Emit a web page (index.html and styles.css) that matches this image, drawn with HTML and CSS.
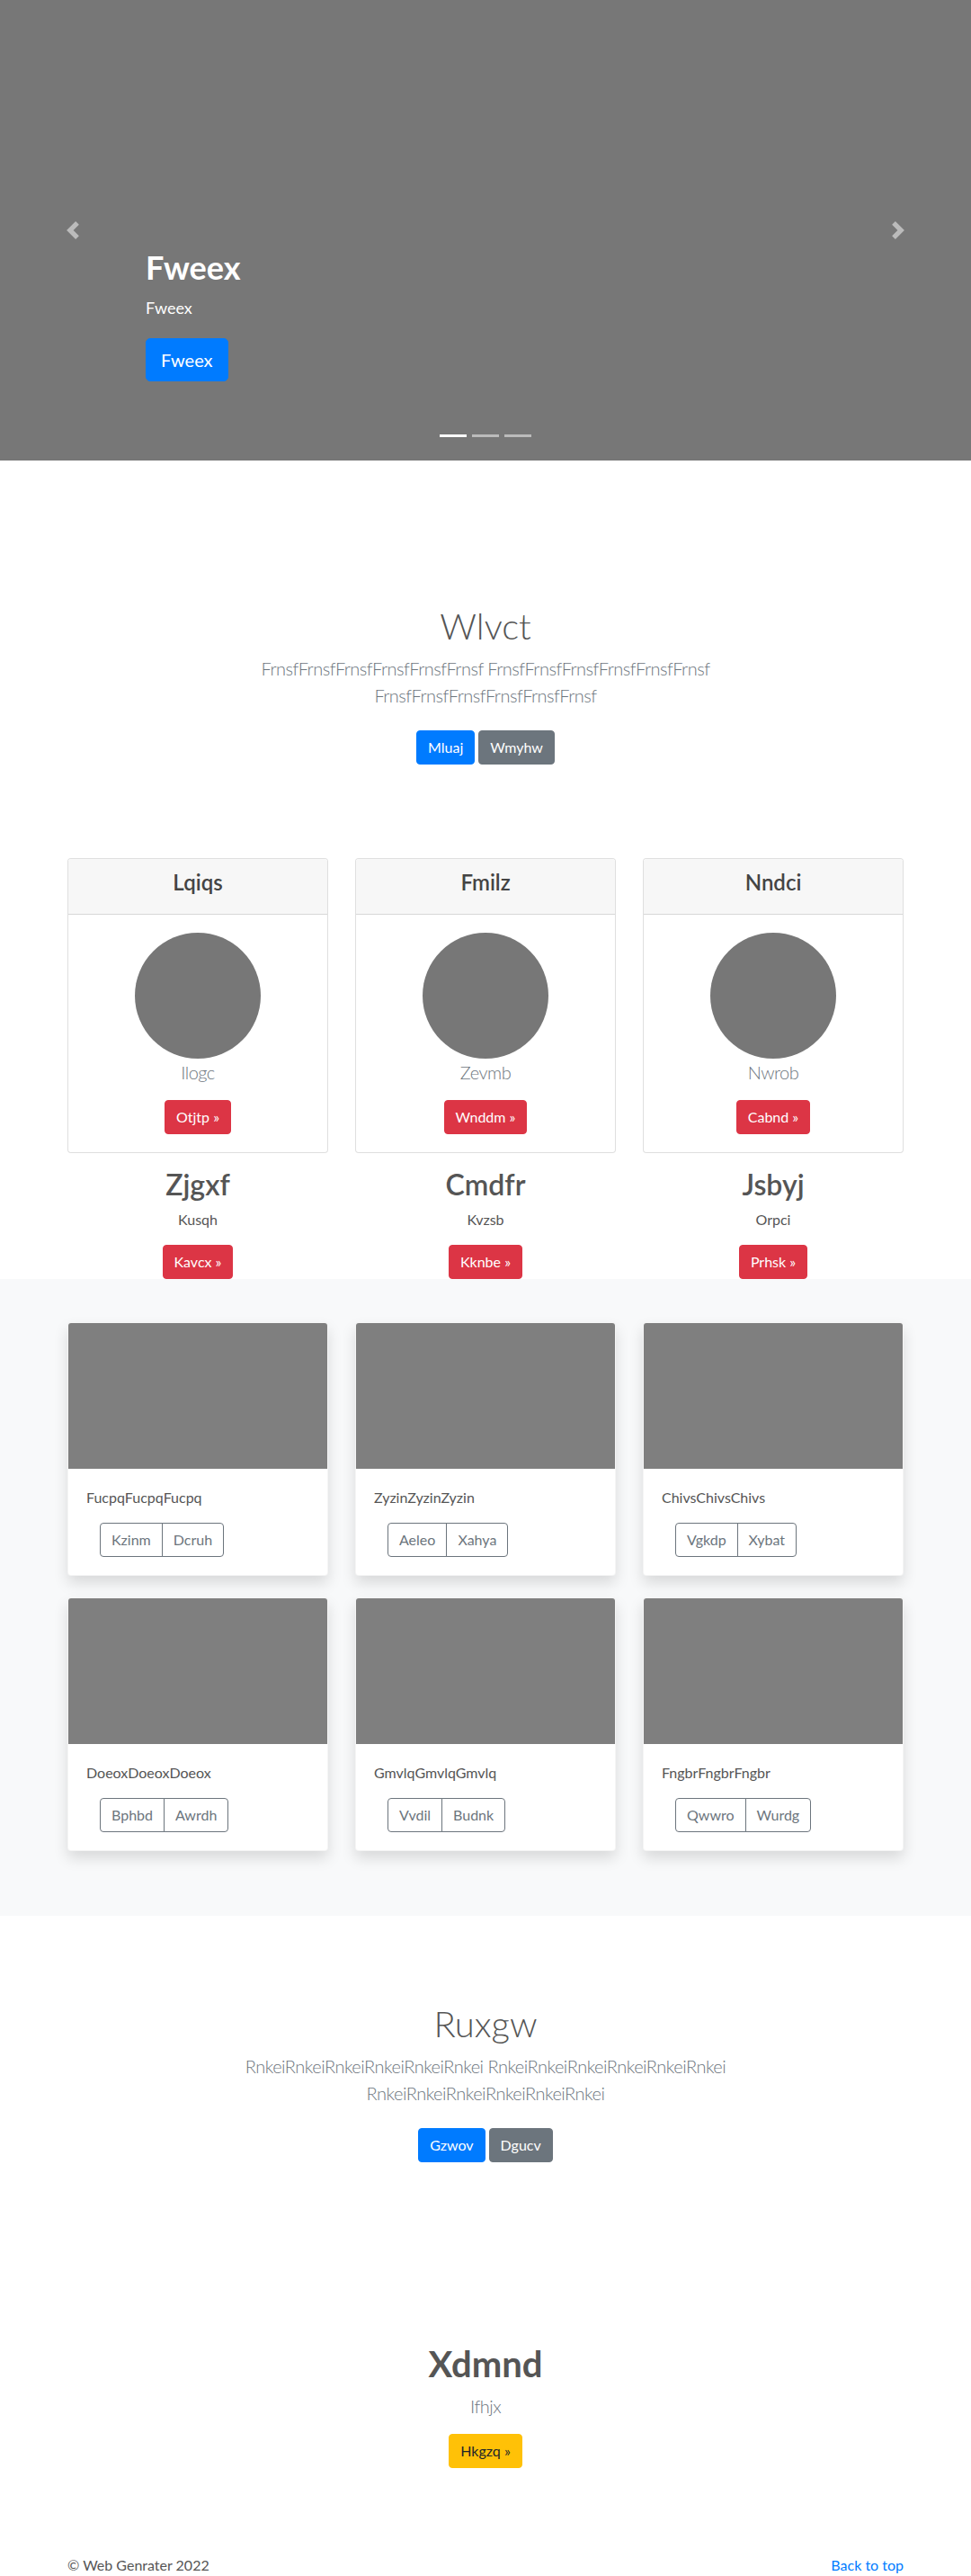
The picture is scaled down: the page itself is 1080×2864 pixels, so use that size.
FILE: index.html
```html
<!DOCTYPE html>
<html lang="en">
<head>
    <meta charset="UTF-8">
    <meta name="viewport" content="width=device-width, initial-scale=1.0">
    <title>Web Genrater</title>
    <link rel="stylesheet" href="styles.css">
</head>
<body>
    <!-- 轮播 -->
    <div class="hero">
        <a class="hero-control hero-prev" href="#">
            <svg width="20" height="20" viewBox="0 0 8 8"><path d="M5.25 0l-4 4 4 4 1.5-1.5L4.25 4l2.5-2.5L5.25 0z"/></svg>
        </a>
        <div class="hero-caption">
            <h1>Fweex</h1>
            <p>Fweex</p>
            <a class="btn btn-lg btn-primary" href="#">Fweex</a>
        </div>
        <a class="hero-control hero-next" href="#">
            <svg width="20" height="20" viewBox="0 0 8 8"><path d="M2.75 0l-1.5 1.5L3.75 4l-2.5 2.5L2.75 8l4-4-4-4z"/></svg>
        </a>
        <ol class="hero-indicators">
            <li class="active"></li>
            <li></li>
            <li></li>
        </ol>
    </div>

    <!-- 介绍 -->
    <section class="intro">
        <h1 class="intro-title">Wlvct</h1>
        <p class="lead text-muted">FrnsfFrnsfFrnsfFrnsfFrnsfFrnsf FrnsfFrnsfFrnsfFrnsfFrnsfFrnsf FrnsfFrnsfFrnsfFrnsfFrnsfFrnsf</p>
        <div class="btn-row">
            <a class="btn btn-primary" href="#">Mluaj</a>
            <a class="btn btn-secondary" href="#">Wmyhw</a>
        </div>
    </section>

    <!-- 三栏卡片 -->
    <div class="container">
        <div class="grid-3">
            <div class="col">
                <div class="card price-card">
                    <div class="card-header"><h4>Lqiqs</h4></div>
                    <div class="card-body">
                        <div class="avatar"></div>
                        <p class="lead text-muted">Ilogc</p>
                        <a class="btn btn-danger" href="#">Otjtp &raquo;</a>
                    </div>
                </div>
                <h2>Zjgxf</h2>
                <p>Kusqh</p>
                <a class="btn btn-danger" href="#">Kavcx &raquo;</a>
            </div>
            <div class="col">
                <div class="card price-card">
                    <div class="card-header"><h4>Fmilz</h4></div>
                    <div class="card-body">
                        <div class="avatar"></div>
                        <p class="lead text-muted">Zevmb</p>
                        <a class="btn btn-danger" href="#">Wnddm &raquo;</a>
                    </div>
                </div>
                <h2>Cmdfr</h2>
                <p>Kvzsb</p>
                <a class="btn btn-danger" href="#">Kknbe &raquo;</a>
            </div>
            <div class="col">
                <div class="card price-card">
                    <div class="card-header"><h4>Nndci</h4></div>
                    <div class="card-body">
                        <div class="avatar"></div>
                        <p class="lead text-muted">Nwrob</p>
                        <a class="btn btn-danger" href="#">Cabnd &raquo;</a>
                    </div>
                </div>
                <h2>Jsbyj</h2>
                <p>Orpci</p>
                <a class="btn btn-danger" href="#">Prhsk &raquo;</a>
            </div>
        </div>
    </div>

    <!-- 相册 -->
    <div class="album">
        <div class="container">
            <div class="grid-3 album-grid">
                <div class="card album-card">
                    <div class="thumb"></div>
                    <div class="card-body">
                        <p>FucpqFucpqFucpq</p>
                        <div class="btn-group">
                            <a class="btn btn-outline" href="#">Kzinm</a>
                            <a class="btn btn-outline" href="#">Dcruh</a>
                        </div>
                    </div>
                </div>
                <div class="card album-card">
                    <div class="thumb"></div>
                    <div class="card-body">
                        <p>ZyzinZyzinZyzin</p>
                        <div class="btn-group">
                            <a class="btn btn-outline" href="#">Aeleo</a>
                            <a class="btn btn-outline" href="#">Xahya</a>
                        </div>
                    </div>
                </div>
                <div class="card album-card">
                    <div class="thumb"></div>
                    <div class="card-body">
                        <p>ChivsChivsChivs</p>
                        <div class="btn-group">
                            <a class="btn btn-outline" href="#">Vgkdp</a>
                            <a class="btn btn-outline" href="#">Xybat</a>
                        </div>
                    </div>
                </div>
                <div class="card album-card">
                    <div class="thumb"></div>
                    <div class="card-body">
                        <p>DoeoxDoeoxDoeox</p>
                        <div class="btn-group">
                            <a class="btn btn-outline" href="#">Bphbd</a>
                            <a class="btn btn-outline" href="#">Awrdh</a>
                        </div>
                    </div>
                </div>
                <div class="card album-card">
                    <div class="thumb"></div>
                    <div class="card-body">
                        <p>GmvlqGmvlqGmvlq</p>
                        <div class="btn-group">
                            <a class="btn btn-outline" href="#">Vvdil</a>
                            <a class="btn btn-outline" href="#">Budnk</a>
                        </div>
                    </div>
                </div>
                <div class="card album-card">
                    <div class="thumb"></div>
                    <div class="card-body">
                        <p>FngbrFngbrFngbr</p>
                        <div class="btn-group">
                            <a class="btn btn-outline" href="#">Qwwro</a>
                            <a class="btn btn-outline" href="#">Wurdg</a>
                        </div>
                    </div>
                </div>
            </div>
        </div>
    </div>

    <!-- 第二个介绍 -->
    <section class="intro">
        <h1 class="intro-title">Ruxgw</h1>
        <p class="lead text-muted">RnkeiRnkeiRnkeiRnkeiRnkeiRnkei RnkeiRnkeiRnkeiRnkeiRnkeiRnkei RnkeiRnkeiRnkeiRnkeiRnkeiRnkei</p>
        <div class="btn-row">
            <a class="btn btn-primary" href="#">Gzwov</a>
            <a class="btn btn-secondary" href="#">Dgucv</a>
        </div>
    </section>

    <!-- 特色 -->
    <section class="feature">
        <h1 class="feature-title">Xdmnd</h1>
        <p class="lead text-muted">Ifhjx</p>
        <a class="btn btn-warning" href="#">Hkgzq &raquo;</a>
    </section>

    <footer class="footer">
        <div class="container footer-inner">
            <p>&copy; Web Genrater 2022</p>
            <a href="#">Back to top</a>
        </div>
    </footer>
</body>
</html>
```

FILE: styles.css
```css
body {
    margin: 0;
    font-family: Lato, "Noto Sans", sans-serif;
    font-size: 16px;
    line-height: 1.5;
    color: #555;
    background-color: #fff;
}

h1, h2, h4 {
    margin: 0 0 8px;
    line-height: 1.2;
    font-weight: 600;
}

h1 { font-size: 40px; }
h2 { font-size: 32px; }
h4 { font-size: 24px; }

p {
    margin: 0 0 16px;
}

a {
    color: #007bff;
    text-decoration: none;
}

.container {
    max-width: 960px;
    margin: 0 auto;
    padding: 0 15px;
    box-sizing: border-box;
}

.lead {
    font-size: 20px;
    font-weight: 300;
    letter-spacing: -0.5px;
}

.text-muted {
    color: #6c757d;
}

/* 按钮 */
.btn {
    display: inline-block;
    padding: 6px 12px;
    font-size: 16px;
    line-height: 24px;
    border: 1px solid transparent;
    border-radius: 4px;
    color: #fff;
    text-align: center;
}

.btn-lg {
    padding: 8px 16px;
    font-size: 20px;
    line-height: 30px;
    border-radius: 5px;
}

.btn-primary { background-color: #007bff; border-color: #007bff; }
.btn-secondary { background-color: #6c757d; border-color: #6c757d; }
.btn-danger { background-color: #dc3545; border-color: #dc3545; }
.btn-warning { background-color: #ffc107; border-color: #ffc107; color: #212529; }

.btn-outline {
    color: #6c757d;
    border-color: #6c757d;
    background-color: transparent;
}

.btn-group {
    display: inline-flex;
    margin-left: 15px;
}

.btn-group .btn:first-child {
    border-top-right-radius: 0;
    border-bottom-right-radius: 0;
}

.btn-group .btn + .btn {
    margin-left: -1px;
    border-top-left-radius: 0;
    border-bottom-left-radius: 0;
}

/* 轮播 */
.hero {
    position: relative;
    height: 512px;
    margin-bottom: 64px;
    background-color: #777;
    display: flex;
    align-items: flex-end;
    padding: 0 15% 88px;
    box-sizing: border-box;
    color: #fff;
}

.hero-caption h1 {
    font-size: 36px;
    font-weight: 700;
    margin-bottom: 10px;
}

.hero-caption p {
    font-size: 18px;
    line-height: 27px;
    margin-bottom: 20px;
}

.hero-control {
    position: absolute;
    top: 0;
    bottom: 0;
    width: 15%;
    display: flex;
    align-items: center;
    justify-content: center;
    opacity: 0.5;
    fill: #fff;
}

.hero-prev { left: 0; }
.hero-next { right: 0; }

.hero-indicators {
    position: absolute;
    left: 0;
    right: 0;
    bottom: 26px;
    display: flex;
    justify-content: center;
    gap: 6px;
    margin: 0;
    padding: 0;
    list-style: none;
}

.hero-indicators li {
    width: 30px;
    height: 3px;
    background-color: #fff;
    opacity: 0.5;
}

.hero-indicators li.active {
    opacity: 1;
}

/* 介绍区块 */
.intro {
    max-width: 640px;
    margin: 0 auto;
    padding: 96px 15px 104px;
    box-sizing: border-box;
    text-align: center;
}

.intro-title {
    font-weight: 300;
}

.intro .lead {
    margin-bottom: 24px;
}

.btn-row {
    display: flex;
    justify-content: center;
    gap: 4px;
}

/* 三栏 */
.grid-3 {
    display: grid;
    grid-template-columns: repeat(3, 1fr);
    column-gap: 30px;
}

.col {
    text-align: center;
}

.col > p {
    font-weight: 400;
}

.card {
    background-color: #fff;
    border: 1px solid rgba(0, 0, 0, 0.125);
    border-radius: 4px;
    overflow: hidden;
}

.price-card {
    margin-bottom: 16px;
}

.card-header {
    padding: 12px 20px;
    background-color: #f7f7f7;
    border-bottom: 1px solid rgba(0, 0, 0, 0.125);
}

.card-header h4 {
    color: #444;
}

.card-body {
    padding: 20px;
}

.avatar {
    width: 140px;
    height: 140px;
    margin: 0 auto;
    border-radius: 50%;
    background-color: #777;
}

/* 相册 */
.album {
    background-color: #f8f9fa;
    padding: 48px 0 72px;
}

.album-grid {
    row-gap: 24px;
}

.album-card {
    border-color: rgba(0, 0, 0, 0.04);
    box-shadow: 0 8px 16px rgba(0, 0, 0, 0.13);
}

.thumb {
    height: 162px;
    background-color: #7f7f7f;
}

/* 特色 */
.feature {
    padding: 96px 15px;
    text-align: center;
}

.feature-title {
    font-weight: 700;
}

/* 页脚 */
.footer-inner {
    display: flex;
    justify-content: space-between;
}

.footer-inner p {
    margin: 0;
}
```
